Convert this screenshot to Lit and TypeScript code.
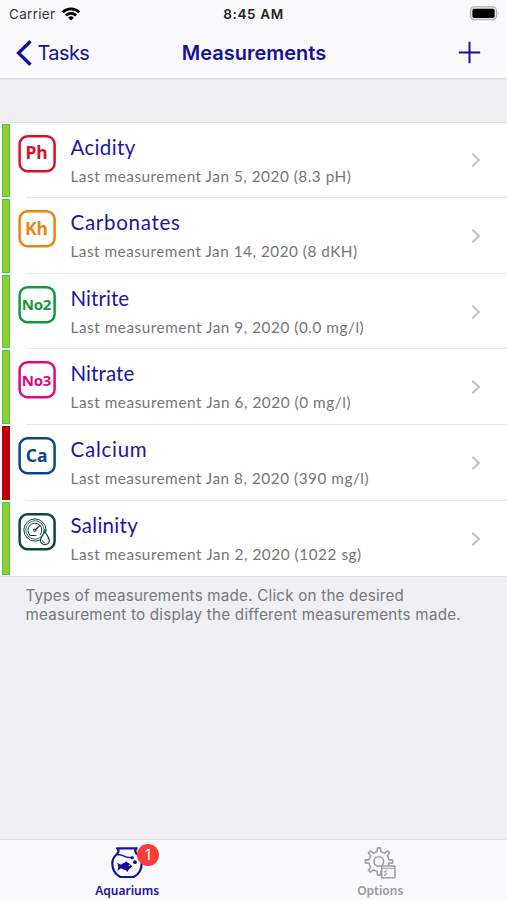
import { LitElement, html, css, svg } from "lit";
import { customElement, property } from "lit/decorators.js";
import { styleMap } from "lit/directives/style-map.js";

interface Measurement {
  name: string;
  detail: string;
  code: string;
  color: string;
  alert?: boolean;
  nameSpacing: number;
  detailSpacing: number;
}

const measurements: Measurement[] = [
  { name: "Acidity", detail: "Jan 5, 2020 (8.3 pH)", code: "Ph", color: "#d8102a", nameSpacing: 0.35, detailSpacing: 0.52 },
  { name: "Carbonates", detail: "Jan 14, 2020 (8 dKH)", code: "Kh", color: "#ea8310", nameSpacing: 0.72, detailSpacing: 0.51 },
  { name: "Nitrite", detail: "Jan 9, 2020 (0.0 mg/l)", code: "No2", color: "#109a3c", nameSpacing: 0.05, detailSpacing: 0.54 },
  { name: "Nitrate", detail: "Jan 6, 2020 (0 mg/l)", code: "No3", color: "#dc0a80", nameSpacing: 0.1, detailSpacing: 0.55 },
  { name: "Calcium", detail: "Jan 8, 2020 (390 mg/l)", code: "Ca", color: "#0a4590", alert: true, nameSpacing: 0.75, detailSpacing: 0.53 },
  { name: "Salinity", detail: "Jan 2, 2020 (1022 sg)", code: "", color: "#0c4548", nameSpacing: 0.3, detailSpacing: 0.55 },
];

const gauge = svg`
  <g fill="none" stroke="#0c4548" stroke-linecap="round">
    <circle cx="17" cy="17" r="11.1" stroke-width="1"/>
    <circle cx="17" cy="17" r="9.2" stroke-width=".8"/>
    <path d="M12 22.2a7 7 0 1 1 10.2-.4" stroke-width="1"/>
    <path d="M17 17l4.5-4.2" stroke-width="1.4"/>
    <circle cx="16.7" cy="17.3" r="1.2" stroke-width=".9"/>
    <path d="M12 22.5h6" stroke-width="1"/>
    <path d="M26.8 18.3c1.2 3 4.5 6 4.5 9a4.4 4.4 0 0 1-8.8 0c0-3 3-6 4.3-9z" fill="#fff" stroke-width="1.2"/>
    <path d="M24.5 27.5a2.4 2.4 0 0 0 2.2 2.5" stroke-width=".8"/>
  </g>`;

/** Outline of a cog with evenly spaced, slightly tapered teeth. */
function cogPath(cx: number, cy: number, inner: number, outer: number, teeth: number): string {
  const step = (Math.PI * 2) / teeth;
  const at = (r: number, a: number) => `${(cx + r * Math.sin(a)).toFixed(2)} ${(cy - r * Math.cos(a)).toFixed(2)}`;
  let d = "";
  for (let i = 0; i < teeth; i++) {
    const a = i * step;
    d += `${i ? "L" : "M"}${at(inner, a - step * 0.24)}L${at(outer, a - step * 0.13)}L${at(outer, a + step * 0.13)}L${at(inner, a + step * 0.24)}`;
    d += `A${inner} ${inner} 0 0 1 ${at(inner, a + step * 0.76)}`;
  }
  return d + "Z";
}

@customElement("measurement-row")
class MeasurementRow extends LitElement {
  @property({ attribute: false }) item!: Measurement;

  static styles = css`
    :host { display: flex; height: 75.67px; box-sizing: border-box; padding-left: 2px; background: #fff; }
    .bar { width: 8px; margin: 1px 0 1px; box-sizing: border-box; border: 1.5px solid #35d04b; background: #98cb2d; }
    .bar.alert { background: #c00008; border-color: #b80008; }
    .badge { width: 38px; height: 38px; margin: 12px 0 0 7.5px; display: grid; place-items: center; }
    .badge svg { display: block; grid-area: 1 / 1; }
    .code { grid-area: 1 / 1; font: 700 17.5px/20px "Noto Sans", "Open Sans", sans-serif; margin-top: -3px; }
    .code.long { font-size: 15px; letter-spacing: -.3px; margin-top: -1px; }
    .body { flex: 1; display: flex; flex-direction: column; padding: 11px 0 0 15px; white-space: nowrap; font-family: Lato, sans-serif; }
    .name { font-size: 20.5px; line-height: 26px; color: #1c16a3; }
    .detail { font-size: 15.3px; line-height: 20px; margin-top: 6px; color: #757575; }
    .chevron { align-self: center; margin-right: 25.5px; display: block; }
  `;

  render() {
    const m = this.item;
    return html`
      <div class="bar ${m.alert ? "alert" : ""}"></div>
      <div class="badge">
        <svg width="38" height="38" viewBox="0 0 38 38">
          <rect x="1.6" y="1.3" width="35" height="35" rx="8" fill="none" stroke=${m.color} stroke-width="2.5"/>
          ${m.code ? "" : gauge}
        </svg>
        ${m.code ? html`<span class="code ${m.code.length > 2 ? "long" : ""}" style=${styleMap({ color: m.color })}>${m.code}</span>` : ""}
      </div>
      <div class="body">
        <div class="name" style=${styleMap({ letterSpacing: `${m.nameSpacing}px` })}>${m.name}</div>
        <div class="detail" style=${styleMap({ letterSpacing: `${m.detailSpacing}px` })}>Last measurement ${m.detail}</div>
      </div>
      <svg class="chevron" width="12" height="16" viewBox="0 0 12 16">
        <path d="M2.3 1.7l6.6 6.3-6.6 6.3" fill="none" stroke="#c3c3c6" stroke-width="2.2"/>
      </svg>`;
  }
}

@customElement("app-root")
class AppRoot extends LitElement {
  static styles = css`
    :host { display: flex; flex-direction: column; width: 507px; height: 900px; overflow: hidden; background: #efeff4; font-family: Inter, sans-serif; }
    .header { height: 78px; background: #fafafd; border-bottom: 1px solid #dadade; box-shadow: 0 1px 1px #e6e6ea; }
    .status { height: 27px; display: grid; grid-template-columns: 1fr auto 1fr; align-items: center; padding: 0 7px 0 9px; font-size: 13.5px; color: #222; }
    .carrier { display: flex; align-items: center; gap: 6px; color: #333; letter-spacing: .3px; }
    .time { font-weight: 600; font-size: 13.5px; letter-spacing: .65px; margin-right: 2px; }
    .battery { justify-self: end; }
    .nav { height: 51px; display: grid; grid-template-columns: 1fr auto 1fr; align-items: center; padding: 0 26px 0 16px; color: #14109a; }
    .back { display: flex; align-items: center; gap: 5.5px; font-size: 20px; letter-spacing: -.6px; }
    .title { font-size: 20px; font-weight: 600; margin: 0 -5.5px 0 5.5px; }
    .plus { justify-self: end; }
    svg { display: block; }
    .content { flex: 1; padding-top: 42.5px; }
    .list { border-top: 1px solid #e3e3e7; border-bottom: 1px solid #e0e0e4; height: 455px; box-sizing: border-box; background: #fff; }
    .sep { height: 1px; margin: -1px 0 0 26px; background: #e6e6e8; position: relative; }
    .note { margin: 9px 0 0 25.5px; font-size: 15.2px; line-height: 19.8px; color: #77777c; white-space: nowrap; }
    .note div { width: max-content; }
    .l1 { letter-spacing: .21px; }
    .l2 { letter-spacing: .24px; }
    .tabs { height: 60px; display: grid; grid-template-columns: 1fr 1fr; background: #fafafd; border-top: 1px solid #dcdce0; }
    .tab { display: flex; flex-direction: column; align-items: center; padding: 5px 0 0 1px; font: 600 12px/15px "Noto Sans", sans-serif; color: #14109a; }
    .tab.off { color: #98989b; padding-left: 0; }
    .icon { position: relative; height: 38px; }
    .count { position: absolute; left: 25.5px; top: -1px; width: 22px; height: 22px; border-radius: 50%; background: #fc3d33; color: #fff; font: 400 15px/22px Inter, sans-serif; text-align: center; }
  `;

  render() {
    return html`
      <div class="header">
        <div class="status">
          <div class="carrier"><span>Carrier</span>
            <svg width="20" height="16" viewBox="0 0 20 16" fill="none" stroke="#000" stroke-width="2.7">
              <path d="M1.7 6.2a12 12 0 0 1 16.6 0"/><path d="M4.9 9.5a7.4 7.4 0 0 1 10.2 0"/>
              <path d="M10 14.6l-2.8-2.9a4 4 0 0 1 5.6 0z" fill="#000" stroke="none"/>
            </svg>
          </div>
          <div class="time">8:45 AM</div>
          <svg class="battery" width="31" height="15" viewBox="0 0 31 15">
            <rect x="1.5" y=".8" width="26" height="13" rx="4" fill="#e3e3e5" stroke="#aaaaad" stroke-width="1.1"/>
            <rect x="3.4" y="2.7" width="22.2" height="9.2" rx="2" fill="#000"/>
            <path d="M29 5.2q1.8 2.1 0 4.2z" fill="#aaaaad"/>
          </svg>
        </div>
        <div class="nav">
          <div class="back">
            <svg width="16" height="26" viewBox="0 0 16 26"><path d="M14.5 1.3L2.5 13l12 11.7" fill="none" stroke="#14109a" stroke-width="3.3"/></svg>
            <span>Tasks</span>
          </div>
          <div class="title">Measurements</div>
          <svg class="plus" width="23" height="23" viewBox="0 0 23 23"><path d="M.8 11.5h21.4M11.5.8v21.4" stroke="#14109a" stroke-width="2"/></svg>
        </div>
      </div>
      <div class="content">
        <div class="list">
          ${measurements.map((m, i) => html`<measurement-row .item=${m}></measurement-row>${i < measurements.length - 1 ? html`<div class="sep"></div>` : ""}`)}
        </div>
        <div class="note">
          <div class="l1">Types of measurements made. Click on the desired</div>
          <div class="l2">measurement to display the different measurements made.</div>
        </div>
      </div>
      <div class="tabs">
        <div class="tab">
          <div class="icon">
            <svg width="32" height="34" viewBox="0 0 32 34" fill="none" stroke="#14109a" stroke-width="2.2">
              <path d="M5.2 3.3h21.4M7 4c1 2 .5 3.6-1 5C3 11.5 1.3 14.6 1.3 18.400c0 5.800 3 10.800 8 13.600h13.400c5-2.800 8-7.800 8-13.600 0-3.800-1.700-6.900-4.900-9.400-1.500-1.400-2-3-1-5" stroke-linejoin="round"/>
              <path d="M6.500 9.800q3.500-.6 6.500 1.400t9.500 1" stroke-width="1.500"/>
              <path d="M6.300 17.700l3.700 2q5.500-5 11.300 1.500-5.800 6.400-11.300 2.100l-3.700 2.500 1-4z" fill="#14109a" stroke="none"/>
              <path d="M12.500 19.500l2.500-3.300 3.500 2.800zM13 23.500l3.500 3.500 1.500-3z" fill="#14109a" stroke="none"/>
              <circle cx="18.300" cy="20.500" r=".8" fill="#fafafd" stroke="none"/>
              <circle cx="23.900" cy="17.200" r="1.900" fill="#14109a" stroke="none"/>
              <circle cx="21.200" cy="12.700" r="1.500" fill="#14109a" stroke="none"/>
            </svg>
            <span class="count">1</span>
          </div>
          <span>Aquariums</span>
        </div>
        <div class="tab off">
          <div class="icon">
            <svg width="32" height="34" viewBox="0 0 32 34" fill="none" stroke="#a0a0a3" stroke-width="1.6" stroke-linejoin="round">
              <path d=${cogPath(15, 16.5, 10, 13.7, 8)}/>
              <circle cx="14.8" cy="16.5" r="4.8"/>
              <rect x="17.7" y="21" width="13.300" height="11.800" fill="#fafafd"/>
              <path d="M17.700 23.300h13.300" stroke-width="1.100"/>
              <path d="M20 26.300l1 1 1.800-2.300M20 29.500l1 1 1.800-2.300" stroke-width="1.100"/>
            </svg>
          </div>
          <span>Options</span>
        </div>
      </div>`;
  }
}
